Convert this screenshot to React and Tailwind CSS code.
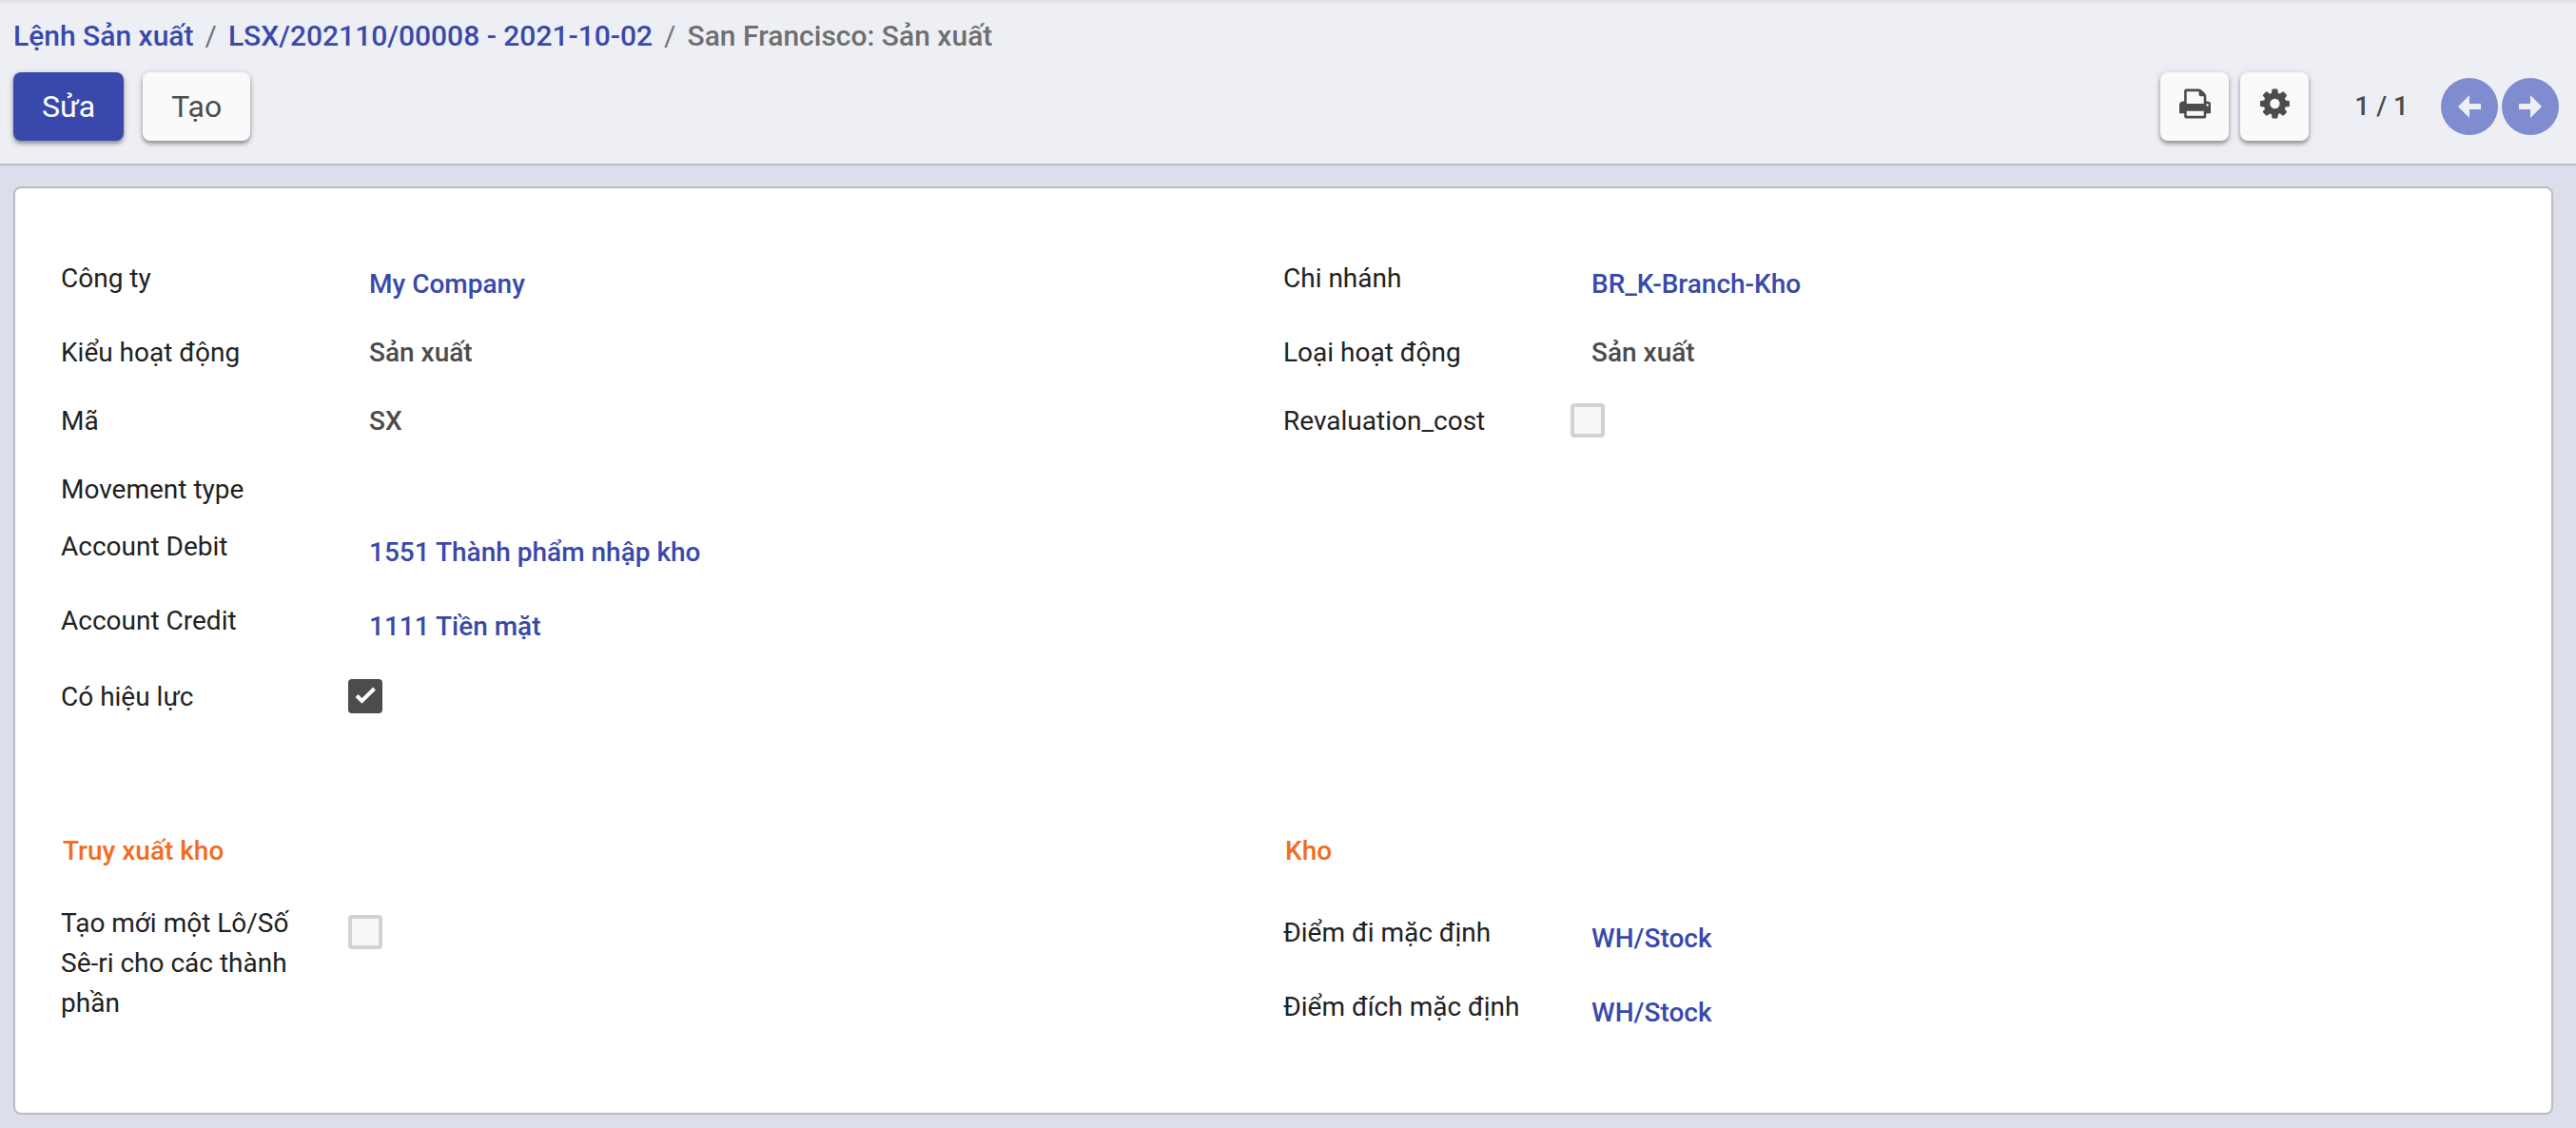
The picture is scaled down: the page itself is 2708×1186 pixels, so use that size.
const PRINT =
  "M384 1536h896v-256h-896v256zM384 896h896v-384h-160q-40 0-68-28t-28-68v-160h-640v640zM1536 960q0-26-19-45t-45-19-45 19-19 45 19 45 45 19 45-19 19-45zM1664 960v416q0 13-9.5 22.5t-22.5 9.5h-224v160q0 40-28 68t-68 28h-960q-40 0-68-28t-28-68v-160h-224q-13 0-22.5-9.5t-9.5-22.5v-416q0-79 56.5-135.5t135.5-56.5h64v-544q0-40 28-68t68-28h672q40 0 88 20t76 48l152 152q28 28 48 76t20 88v256h64q79 0 135.5 56.5t56.5 135.5z";
const COG =
  "M1024 896q0-106-75-181t-181-75-181 75-75 181 75 181 181 75 181-75 75-181zM1536 787v222q0 12-8 23t-20 13l-185 28q-19 54-39 91 35 50 107 138 10 12 10 25t-9 23q-27 37-99 108t-94 71q-12 0-26-9l-138-108q-44 23-91 38-16 136-29 186-7 28-36 28h-222q-14 0-24.5-8.5t-11.5-21.5l-28-184q-49-16-90-37l-141 107q-10 9-25 9-14 0-25-11-126-114-165-168-7-10-7-23 0-12 8-23 15-21 51-66.5t54-70.5q-27-50-41-99l-183-27q-13-2-21-12.5t-8-23.5v-222q0-12 8-23t19-13l186-28q14-46 39-92-40-57-107-138-10-12-10-24 0-10 9-23 26-36 98.5-107.5t94.5-71.5q13 0 26 10l138 107q44-23 91-38 16-136 29-186 7-28 36-28h222q14 0 24.5 8.5t11.5 21.5l28 184q49 16 90 37l142-107q9-9 24-9 13 0 25 10 129 119 165 170 7 8 7 22 0 12-8 23-15 21-51 66.5t-54 70.5q26 50 41 98l183 28q13 2 21 12.5t8 23.5z";

const RAISED = "shadow-[0_3px_4px_rgba(0,0,0,0.35),0_1px_8px_rgba(0,0,0,0.12)]";

function ToolButton({ label, path, viewBox }) {
  return (
    <button
      type="button"
      aria-label={label}
      className={`flex h-[72px] w-[72px] justify-center rounded-lg bg-[#fafafa] pt-[15px] text-[#4c4c4c] ${RAISED}`}
    >
      <svg viewBox={viewBox} className="h-9" fill="currentColor" aria-hidden="true">
        <path d={path} />
      </svg>
    </button>
  );
}

function PagerButton({ label, path }) {
  return (
    <button
      type="button"
      aria-label={label}
      className="flex h-[60px] w-[60px] items-center justify-center rounded-full bg-[#7f8ccf] text-[#eeeff5]"
    >
      <svg viewBox="0 0 24 24" className="h-6 w-6" fill="currentColor" aria-hidden="true">
        <path d={path} />
      </svg>
    </button>
  );
}

function Row({ id, label, height, children }) {
  const labelClass = "w-[324px] shrink-0 pr-[60px]";
  return (
    <div className={`flex items-start ${height}`}>
      {id ? (
        <label htmlFor={id} className={labelClass}>
          {label}
        </label>
      ) : (
        <span className={labelClass}>{label}</span>
      )}
      {children}
    </div>
  );
}

function LinkRow({ label, value, height = "min-h-[78px]" }) {
  return (
    <Row label={label} height={height}>
      <a href="#" className="pt-[6px] font-medium text-[#3949ab]">
        {value}
      </a>
    </Row>
  );
}

function TextRow({ label, value }) {
  return (
    <Row label={label} height="min-h-[72px]">
      <span className="font-medium text-[#4c4c4c]">{value}</span>
    </Row>
  );
}

function CheckRow({ id, label, checked = false, offset = "mt-[2px]" }) {
  return (
    <Row id={id} label={label} height="min-h-[42px]">
      <span className={`relative -ml-[22px] h-9 w-9 ${offset}`}>
        <input
          id={id}
          type="checkbox"
          defaultChecked={checked}
          className="peer block h-9 w-9 appearance-none rounded border-4 border-[#d2d2d2] bg-[#f8f8f6] checked:border-[#4c4c4c] checked:bg-[#4c4c4c]"
        />
        <svg
          viewBox="0 0 36 36"
          className="pointer-events-none absolute inset-0 hidden h-9 w-9 peer-checked:block"
          fill="none"
          stroke="#ffffff"
          strokeWidth="4"
          aria-hidden="true"
        >
          <path d="M9 17.5l5.5 5.5L27.5 10" />
        </svg>
      </span>
    </Row>
  );
}

function SectionTitle({ children }) {
  return <h2 className="pl-[2px] font-medium text-[#f26d21]">{children}</h2>;
}

export default function App() {
  return (
    <div className="min-h-screen bg-[#dcdeeb] font-[Roboto,sans-serif] text-[28px] leading-[42px] text-[#212121]">
      <header className="border-b-2 border-[#b9bbc9] bg-[#eeeff5] pr-[18px] pb-6 pl-[14px] shadow-[inset_0_4px_4px_-2px_rgba(0,0,0,0.07)]">
        <nav aria-label="Breadcrumb" className="pt-4">
          <ol className="flex gap-x-3 text-[30px] leading-[44px] font-medium text-[#6f6f6f]">
            <li>
              <a href="#" className="text-[#3949ab]">Lệnh Sản xuất</a>
            </li>
            <li aria-hidden="true" className="font-normal text-[#6c757d]">/</li>
            <li>
              <a href="#" className="text-[#3949ab]">LSX/202110/00008 - 2021-10-02</a>
            </li>
            <li aria-hidden="true" className="font-normal text-[#6c757d]">/</li>
            <li aria-current="page">San Francisco: Sản xuất</li>
          </ol>
        </nav>
        <div className="mt-4 flex items-center justify-between">
          <div className="flex gap-5 text-[32px]">
            <button type="button" className={`h-[72px] rounded-lg bg-[#3949ab] px-[30px] text-white ${RAISED}`}>
              Sửa
            </button>
            <button type="button" className={`h-[72px] rounded-lg bg-[#fafafa] px-[30px] text-[#4c4c4c] ${RAISED}`}>
              Tạo
            </button>
          </div>
          <div className="flex items-center">
            <div className="flex gap-3">
              <ToolButton label="In" path={PRINT} viewBox="0 0 1664 1792" />
              <ToolButton label="Hành động" path={COG} viewBox="0 0 1536 1792" />
            </div>
            <span className="mr-[34px] ml-12 font-medium text-[#4c4c4c]">1 / 1</span>
            <div className="flex gap-1">
              <PagerButton label="Trước" path="M0 12L12 0v9h12v6H12v9z" />
              <PagerButton label="Sau" path="M24 12L12 0v9H0v6h12v9z" />
            </div>
          </div>
        </div>
      </header>

      <main className="pt-[22px] pr-6 pb-[14px] pl-[14px]">
        <div className="rounded-lg border-2 border-[#bcbcbe] bg-white px-12 pt-[74px] pb-[90px]">
          <div className="grid grid-cols-2">
            <div>
              <LinkRow label="Công ty" value="My Company" />
              <TextRow label="Kiểu hoạt động" value="Sản xuất" />
              <TextRow label="Mã" value="SX" />
              <Row label="Movement type" height="min-h-[60px]" />
              <LinkRow label="Account Debit" value="1551 Thành phẩm nhập kho" />
              <LinkRow label="Account Credit" value="1111 Tiền mặt" />
              <div className="pt-[2px]">
                <CheckRow id="active" label="Có hiệu lực" checked />
              </div>
            </div>
            <div>
              <LinkRow label="Chi nhánh" value="BR_K-Branch-Kho" />
              <TextRow label="Loại hoạt động" value="Sản xuất" />
              <CheckRow id="revaluation" label="Revaluation_cost" />
            </div>
          </div>

          <div className="mt-[120px] grid grid-cols-2">
            <section>
              <SectionTitle>Truy xuất kho</SectionTitle>
              <div className="mt-[34px]">
                <CheckRow id="lots" label="Tạo mới một Lô/Số Sê-ri cho các thành phần" offset="mt-3" />
              </div>
            </section>
            <section>
              <SectionTitle>Kho</SectionTitle>
              <div className="mt-[44px]">
                <LinkRow label="Điểm đi mặc định" value="WH/Stock" />
                <LinkRow label="Điểm đích mặc định" value="WH/Stock" height="h-[42px]" />
              </div>
            </section>
          </div>
        </div>
      </main>
    </div>
  );
}
